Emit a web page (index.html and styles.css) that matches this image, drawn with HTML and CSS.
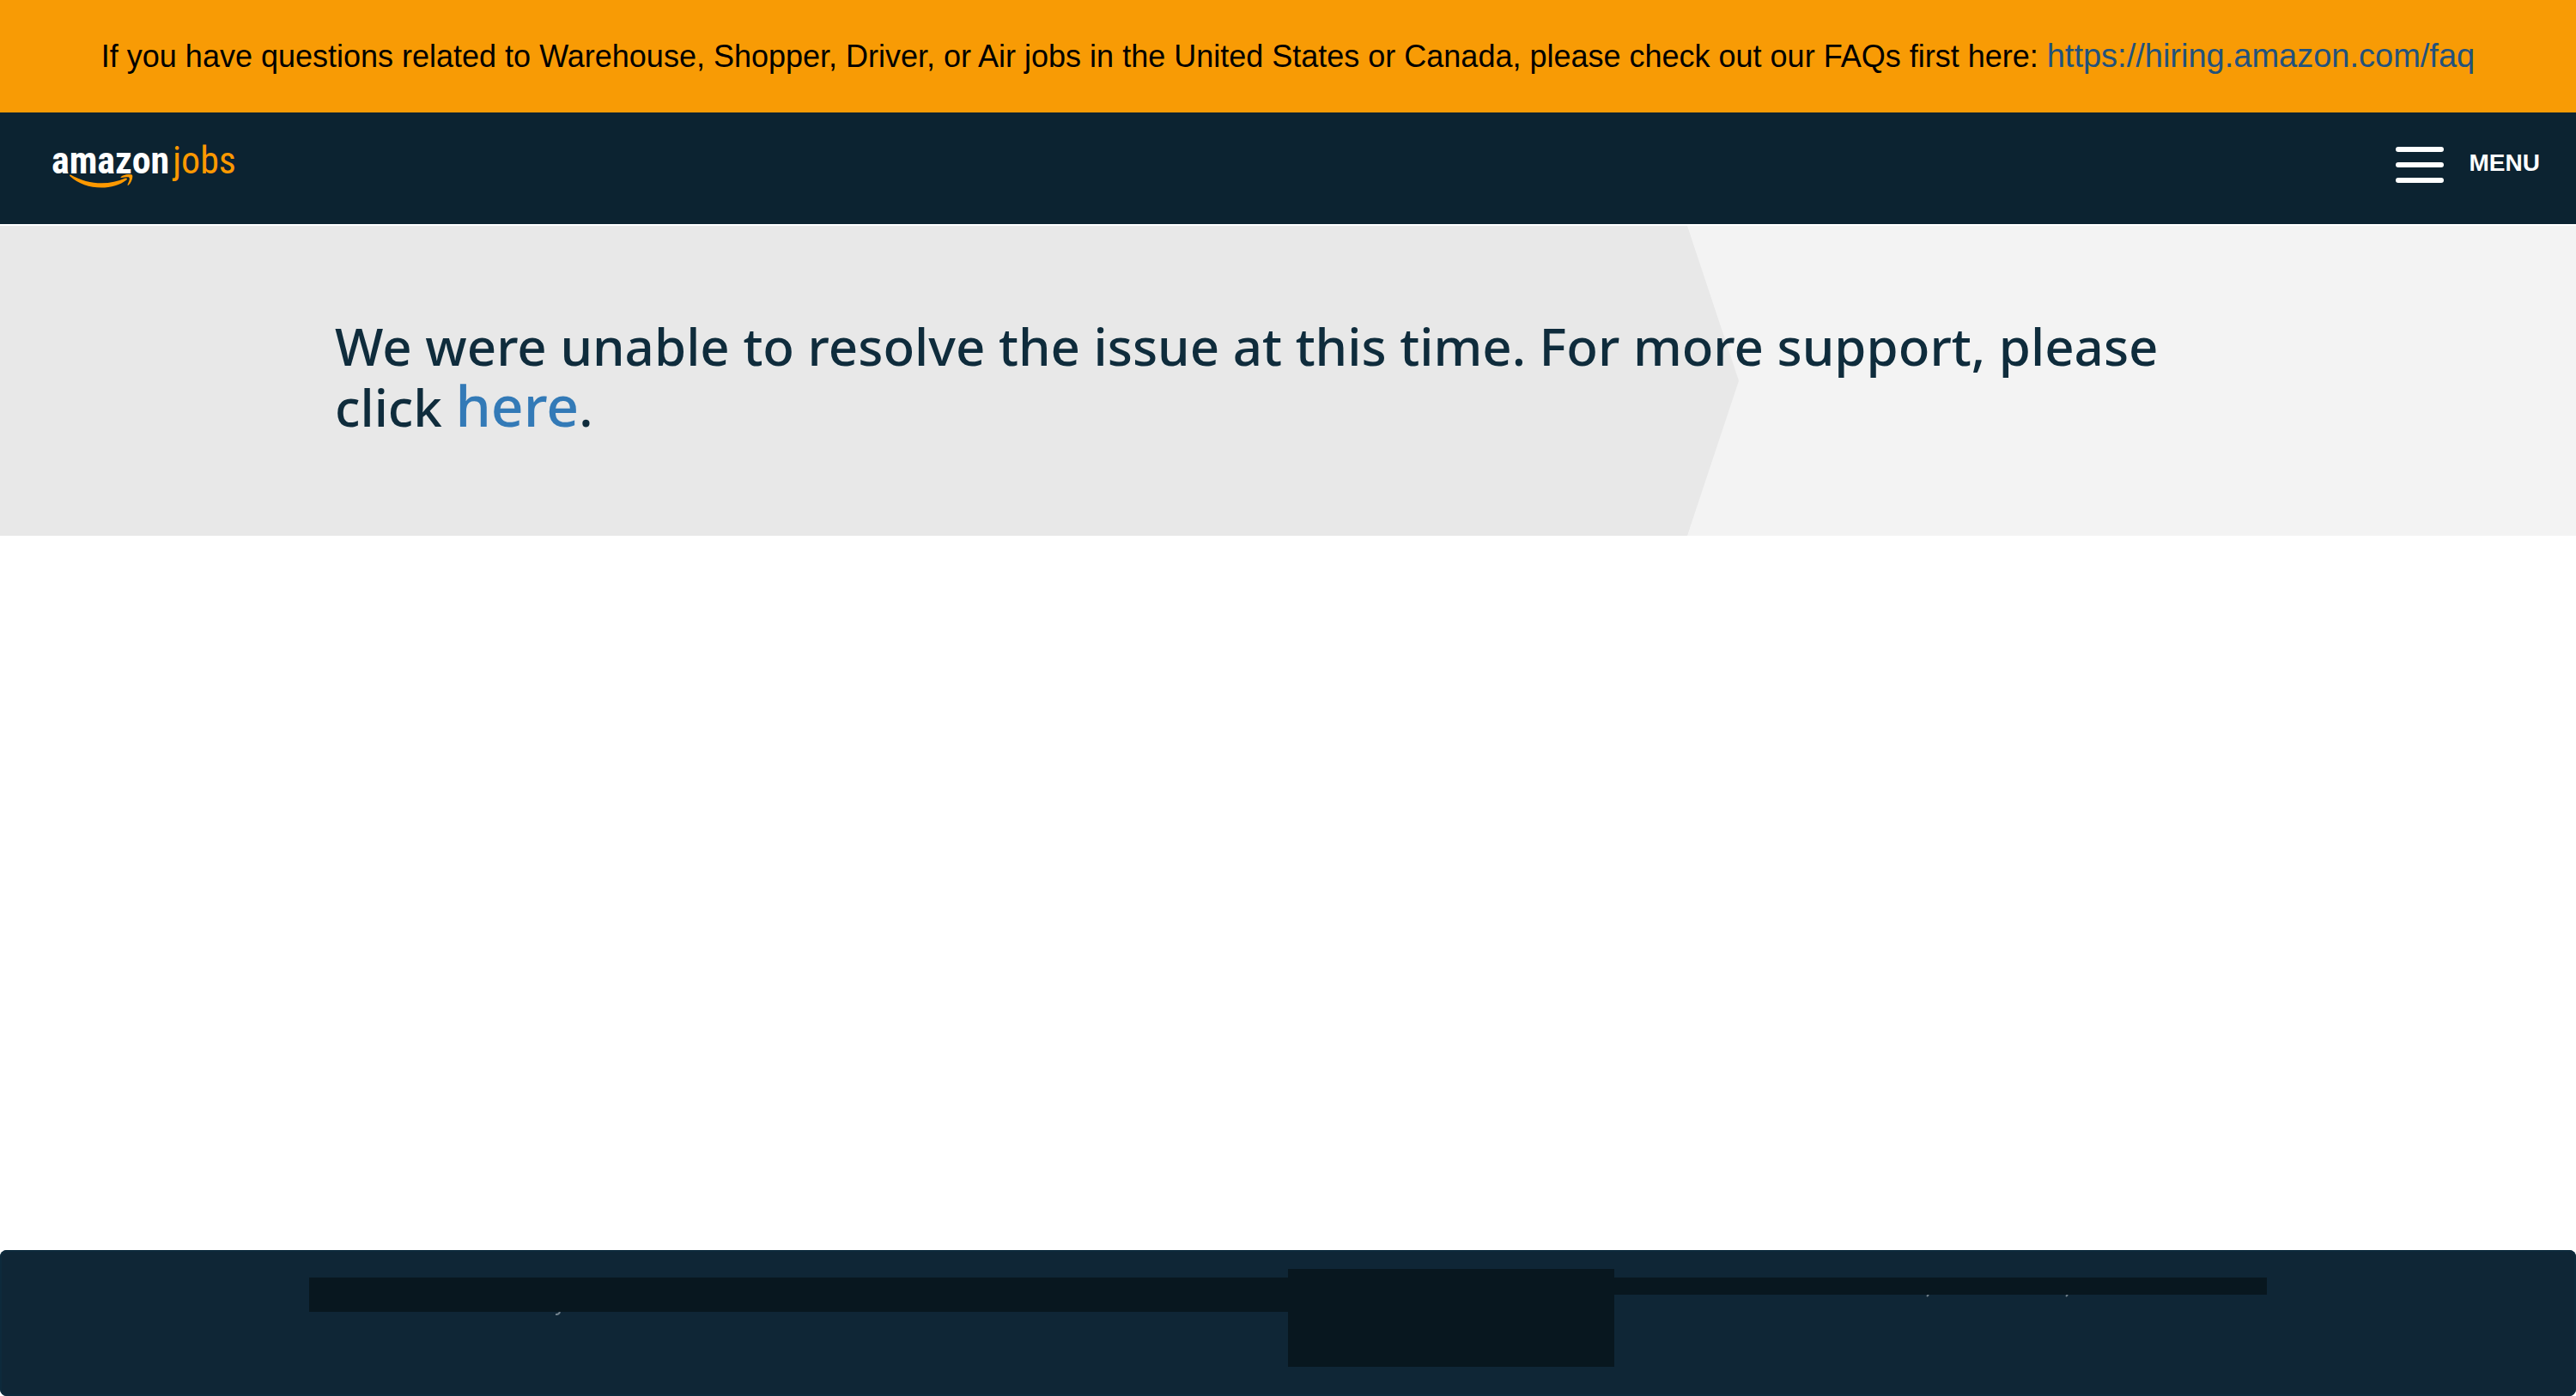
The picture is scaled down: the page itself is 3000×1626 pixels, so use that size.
FILE: index.html
```html
<!DOCTYPE html>
<html lang="en">
<head>
<meta charset="utf-8">
<meta name="viewport" content="width=device-width, initial-scale=1">
<title>amazon jobs</title>
<link rel="stylesheet" href="styles.css">
</head>
<body>
<aside class="notice">
  <p class="notice-text">If you have questions related to Warehouse, Shopper, Driver, or Air jobs in the United States or Canada, please check out our FAQs first here: <a class="notice-link" href="https://hiring.amazon.com/faq">https://hiring.amazon.com/faq</a></p>
</aside>
<header class="navbar">
  <a class="logo" href="#">
    <span class="logo-amazon">amazon</span><span class="logo-jobs">jobs</span>
    <svg class="logo-smile" viewBox="0 0 74 18" aria-hidden="true">
      <path d="M1 .5C22 12.500 46 13 65 4.500Q68 4.300 66.500 6.500C50 19.500 18 19 .3 2Q-.2 .3 1 .5Z"/>
      <path d="M59.500 3.200C64-.5 71-.6 73 .8C74.200 4 72 10 68.500 12.800Q67 13.200 67.800 11.500C69 8.500 70.500 5.300 69.500 4C68.500 2.800 64 3.600 60.500 4Q59 4.100 59.500 3.200Z"/>
    </svg>
  </a>
  <button class="menu" type="button">
    <span class="menu-bars" aria-hidden="true"><i></i><i></i><i></i></span>
    <span class="menu-label">MENU</span>
  </button>
</header>
<main class="main">
  <section class="hero">
    <h1 class="hero-title">We were unable to resolve the issue at this time. For more support, please click <a class="hero-link" href="#">here</a>.</h1>
  </section>
</main>
<footer class="footer">
  <div class="footer-row">
    <div class="block block-left">
      <svg class="tail tail-a" viewBox="0 0 6 4" aria-hidden="true"><path d="M5 0Q4 3.500 0 3" /></svg>
    </div>
    <div class="block block-mid"></div>
    <div class="block block-right">
      <svg class="tail tail-b" viewBox="0 0 6 4" aria-hidden="true"><path d="M3 0L1 2" /></svg>
      <svg class="tail tail-c" viewBox="0 0 6 4" aria-hidden="true"><path d="M3 0L1 2" /></svg>
    </div>
  </div>
</footer>
</body>
</html>
```
FILE: styles.css
```css
* { box-sizing: border-box; }

body {
  margin: 0;
  min-height: 100vh;
  display: flex;
  flex-direction: column;
  background: #fff;
  color: #000;
  font-family: "Liberation Sans", Arial, sans-serif;
}

a { text-decoration: none; }

.notice {
  padding: 41px 20px 40px;
  background: #f89b05;
  text-align: center;
}
.notice-text {
  margin: 0;
  font-size: 36px;
  line-height: 50px;
}
.notice-link {
  color: #23527c;
  font-size: 38px;
  line-height: 1;
}

.navbar {
  display: flex;
  align-items: center;
  justify-content: space-between;
  height: 130px;
  padding: 0 42px 8px 60px;
  background: #0c2331;
}
.logo {
  position: relative;
  display: flex;
  gap: 4px;
  margin-bottom: 10px;
  font-family: "Roboto Condensed", "Liberation Sans", sans-serif;
  font-size: 44px;
  line-height: 52px;
}
.logo-amazon { color: #fff; font-weight: 700; }
.logo-jobs { color: #f90; }
.logo-smile {
  position: absolute;
  left: 21px;
  top: 42px;
  width: 74px;
  height: 18px;
  fill: #f90;
}
.menu {
  display: flex;
  align-items: center;
  gap: 30px;
  padding: 0;
  border: 0;
  background: none;
  color: #fff;
  font: 700 28px/32px "Liberation Sans", Arial, sans-serif;
}
.menu-bars {
  display: flex;
  flex-direction: column;
  gap: 12px;
}
.menu-bars i {
  width: 56px;
  height: 6px;
  border-radius: 3px;
  background: #fff;
}
.menu-label { padding-bottom: 4px; }

.main { flex: 1; padding-top: 2px; }
.hero {
  position: relative;
  isolation: isolate;
  padding: 105px 13% 115px;
  background: #f3f3f3;
}
.hero::before {
  content: "";
  position: absolute;
  z-index: -1;
  inset: 0 auto 0 0;
  width: 67.5%;
  background: #e8e8e8;
  clip-path: polygon(0 0, calc(100% - 60px) 0, 100% 50%, calc(100% - 60px) 100%, 0 100%);
}
.hero-title {
  margin: 0;
  color: #0f2c3c;
  font: 500 60px/70px "Noto Sans", sans-serif;
}
.hero-link {
  color: #337ab7;
  font-size: 66px;
  line-height: 1;
}

.footer {
  min-height: 170px;
  padding: 22px 12% 34px;
  border-radius: 8px;
  background: #0f2636;
  box-shadow: inset 0 0 0 2px #0d2a3c;
}
.footer-row {
  display: grid;
  grid-template-columns: 3fr 1fr 2fr;
  align-items: start;
}
.block {
  position: relative;
  background: #08171f;
}
.block-left { height: 40px; margin-top: 10px; }
.block-mid { height: 114px; }
.block-right { height: 20px; margin-top: 10px; }
.tail {
  position: absolute;
  top: 100%;
  width: 6px;
  height: 4px;
  fill: none;
  stroke: #71818c;
  stroke-width: 2;
}
.tail-a { left: 287px; }
.tail-b { left: 363px; }
.tail-c { left: 525px; }
```
